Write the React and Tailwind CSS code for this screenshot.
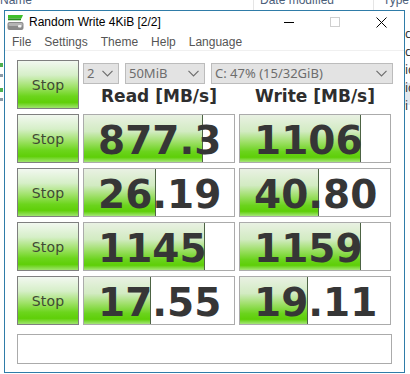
import React from "react";

const rows = [
  { r: "877.3", rw: 119, w: "1106", ww: 121 },
  { r: "26.19", rw: 72, w: "40.80", ww: 79 },
  { r: "1145", rw: 121, w: "1159", ww: 121 },
  { r: "17.55", rw: 67, w: "19.11", ww: 68 },
];

function StopButton() {
  return (
    <div className="w-[62px] h-[49px] shrink-0 border border-[#7f7f7f] bg-[linear-gradient(to_bottom,#f2f8f0_0%,#d6efc8_30%,#9fe268_55%,#6cd51c_75%,#5fcf08_88%,#9fe46e_100%)] flex items-center justify-center">
      <span className="text-[14px] text-[#3f4a35] font-['DejaVu_Sans',sans-serif] tracking-[0.2px] pt-[1px]">Stop</span>
    </div>
  );
}

function ValueBox({ value, fill }) {
  return (
    <div className="relative w-[152px] h-[49px] shrink-0 border border-[#ababab] bg-white overflow-hidden">
      <div
        className="absolute left-0 top-0 bottom-0 border-r border-[#4d6444] bg-[linear-gradient(to_bottom,#e9f1e3_0%,#d2ebc2_35%,#9ddf66_58%,#6ad31c_78%,#5ecf08_90%,#a6e67a_100%)]"
        style={{ width: fill }}
      />
      <div className="relative h-full flex items-center pl-[14px] pt-[3px]">
        <span className="text-[39px] leading-none font-bold text-[#363636] font-['DejaVu_Sans',sans-serif]">
          {value}
        </span>
      </div>
    </div>
  );
}

function Chevron() {
  return (
    <svg width="11" height="7" viewBox="0 0 11 7" className="shrink-0">
      <path d="M0.5 0.8 L5.5 5.8 L10.5 0.8" fill="none" stroke="#6e6e6e" strokeWidth="1.2" />
    </svg>
  );
}

function Select({ text, width }) {
  return (
    <div
      className="h-[21px] shrink-0 border border-[#bcbcbc] bg-[#e3e3e3] flex items-center justify-between pl-[3px] pr-[5px]"
      style={{ width }}
    >
      <span className="text-[13px] text-[#6d6d6d] leading-none">{text}</span>
      <Chevron />
    </div>
  );
}

function AppIcon() {
  return (
    <svg width="17" height="17" viewBox="0 0 17 17" className="shrink-0">
      <path d="M1 1 H16 L14.5 4.5 H1 Z" fill="#3fbf2a" />
      <rect x="1" y="4.5" width="13" height="1.8" fill="#2a8a1e" />
      <rect x="0.5" y="8" width="16" height="8" rx="2" fill="#8a8a8a" />
      <rect x="1.5" y="9" width="14" height="3" rx="1.2" fill="#b4b4b4" />
      <rect x="11" y="11" width="3.5" height="2.5" rx="1" fill="#f4f4f4" />
    </svg>
  );
}

export default function App() {
  return (
    <div className="relative w-[410px] h-[374px] bg-white overflow-hidden font-['Noto_Sans',sans-serif]">
      {/* Explorer behind */}
      <div className="absolute left-0 top-[-7px] text-[12px] leading-[14px] text-[#4c607a] font-['Liberation_Sans',sans-serif]">Name</div>
      <div className="absolute left-[253px] top-0 w-px h-[10px] bg-[#e5e5e5]" />
      <div className="absolute left-[260px] top-[-7px] text-[12px] leading-[14px] text-[#4c607a] font-['Liberation_Sans',sans-serif]">Date modified</div>
      <div className="absolute left-[373px] top-0 w-px h-[10px] bg-[#e5e5e5]" />
      <div className="absolute left-[383px] top-[-7px] text-[12px] leading-[14px] text-[#4c607a] font-['Liberation_Sans',sans-serif]">Type</div>
      <div className="absolute left-[405px] top-[83px] w-[5px] h-[22px] bg-[#e2e8ee]" />
      <div className="absolute left-[405px] top-[25px] flex flex-col text-[12px] leading-[18px] text-[#333] whitespace-nowrap">
        <span>c</span>
        <span>c</span>
        <span>ic</span>
        <span>ic</span>
        <span>i</span>
      </div>
      <div className="absolute left-0 top-[63px] w-[3px] h-[4px] bg-[#4caf50]" />
      <div className="absolute left-0 top-[74px] w-[3px] h-[3px] bg-[#8a9aa8]" />
      <div className="absolute left-0 top-[88px] w-[3px] h-[4px] bg-[#4caf50]" />
      <div className="absolute left-0 top-[98px] w-[3px] h-[3px] bg-[#8a9aa8]" />

      {/* Window */}
      <div className="absolute left-[4px] top-[10px] w-[401px] h-[363px] border border-[#2f7ca8] bg-white flex flex-col">
        {/* Title bar */}
        <div className="h-[22px] flex items-center shrink-0">
          <div className="pl-[2px] pt-[1px]">
            <AppIcon />
          </div>
          <span className="ml-[5px] text-[12px] text-black leading-none pb-[1px] font-['Liberation_Sans',sans-serif]">Random Write 4KiB [2/2]</span>
          <div className="ml-auto flex h-full">
            <div className="w-[46px] h-full flex items-center justify-center">
              <div className="w-[10px] h-px bg-black" />
            </div>
            <div className="w-[46px] h-full flex items-center justify-center">
              <div className="w-[10px] h-[10px] border border-[#cfcfcf]" />
            </div>
            <div className="w-[46px] h-full flex items-center justify-center">
              <svg width="11" height="11" viewBox="0 0 11 11">
                <path d="M0.5 0.5 L10.5 10.5 M10.5 0.5 L0.5 10.5" stroke="#000" strokeWidth="1" />
              </svg>
            </div>
          </div>
        </div>
        {/* Menu bar */}
        <div className="h-[18px] shrink-0 flex items-center gap-[13px] pl-[7px] text-[12px] text-[#555555] border-b border-[#f0f0f0] font-['Liberation_Sans',sans-serif]">
          <span>File</span>
          <span>Settings</span>
          <span>Theme</span>
          <span>Help</span>
          <span>Language</span>
        </div>
        {/* Client */}
        <div className="flex-1 flex flex-col pl-[12px] pt-[9px]">
          <div className="flex gap-[4px]">
            <StopButton />
            <div className="flex flex-col">
              <div className="flex mt-[3px] gap-[6px]">
                <Select text="2" width={36} />
                <Select text="50MiB" width={80} />
                <Select text="C: 47% (15/32GiB)" width={182} />
              </div>
              <div className="flex gap-[4px] h-[25px] items-center">
                <div className="w-[152px] text-center text-[17px] font-bold text-[#2e2e2e] font-['DejaVu_Sans',sans-serif] leading-none">Read [MB/s]</div>
                <div className="w-[152px] text-center text-[17px] font-bold text-[#2e2e2e] font-['DejaVu_Sans',sans-serif] leading-none">Write [MB/s]</div>
              </div>
            </div>
          </div>
          {rows.map((row, i) => (
            <div key={i} className="flex gap-[4px] mt-[5px]">
              <StopButton />
              <ValueBox value={row.r} fill={row.rw} />
              <ValueBox value={row.w} fill={row.ww} />
            </div>
          ))}
          <div className="mt-[9px] w-[375px] h-[30px] border border-[#ababab] bg-white" />
        </div>
      </div>
    </div>
  );
}
